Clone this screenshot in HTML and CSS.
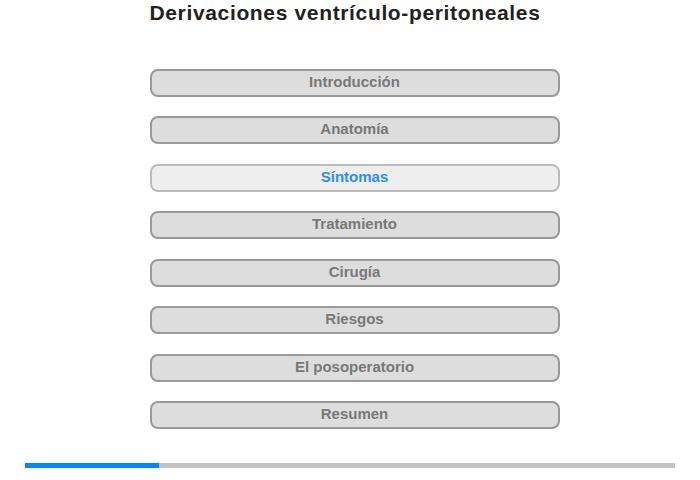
FILE: index.html
```html
<!DOCTYPE html>
<html lang="es">
<head>
    <meta charset="UTF-8">
    <title>Derivaciones ventrículo-peritoneales</title>
    <link rel="stylesheet" href="styles.css">
</head>
<body>

<div class="page">
    <h1>Derivaciones ventrículo-peritoneales</h1>

    <div class="menu">
        <div class="item">Introducción</div>
        <div class="item">Anatomía</div>
        <div class="item active">Síntomas</div>
        <div class="item">Tratamiento</div>
        <div class="item">Cirugía</div>
        <div class="item">Riesgos</div>
        <div class="item">El posoperatorio</div>
        <div class="item">Resumen</div>
    </div>

    <div class="progress">
        <div class="progress-fill" style="width: 20.6%;"></div>
    </div>
</div>

</body>
</html>
```

FILE: styles.css
```css
body {
    margin: 0;
    font-family: 'Liberation Sans', Arial, sans-serif;
    background: #fff;
}
.page {
    width: 700px;
    height: 480px;
    display: flex;
    flex-direction: column;
    align-items: center;
}
h1 {
    font-size: 21px;
    font-weight: bold;
    letter-spacing: 0.65px;
    color: #222;
    margin: 1px 10px 0 0;
    line-height: 24px;
}
.menu {
    margin: 44px 0 0 9px;
    display: flex;
    flex-direction: column;
    gap: 19.43px;
}
.item {
    width: 406px;
    height: 24px;
    line-height: 22px;
    background: #dddddd;
    border: 2px solid #999;
    border-radius: 8px;
    text-align: center;
    font-size: 15px;
    font-weight: bold;
    color: #787878;
}
.item.active {
    background: #eeeeee;
    border-color: #bbb;
    color: #2d8ff0;
}
.progress {
    margin-top: 34px;
    width: 650px;
    height: 5px;
    background: #c4c4c4;
}
.progress-fill {
    height: 100%;
    background: #0088ff;
}
```
